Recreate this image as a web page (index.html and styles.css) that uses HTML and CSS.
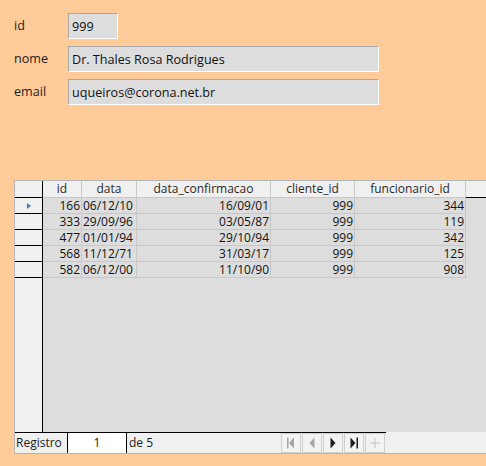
FILE: index.html
```html
<!DOCTYPE html>
<html lang="pt">
<head>
<meta charset="utf-8">
<title>Pedidos</title>
<link rel="stylesheet" href="styles.css">
</head>
<body>
<div class="page">
  <form class="form">
    <div class="field">
      <label class="label">id</label>
      <div class="input input-short">999</div>
    </div>
    <div class="field">
      <label class="label">nome</label>
      <div class="input input-long">Dr. Thales Rosa Rodrigues</div>
    </div>
    <div class="field">
      <label class="label">email</label>
      <div class="input input-long">uqueiros@corona.net.br</div>
    </div>
  </form>

  <div class="grid">
    <div class="grid-body">
      <div class="rowhdr">
        <div class="rh rh-top"></div>
        <div class="rh"><span class="cursor"></span></div>
        <div class="rh"></div>
        <div class="rh"></div>
        <div class="rh"></div>
        <div class="rh"></div>
      </div>
      <div class="cells">
        <div class="hrow">
          <div class="hc c-id">id</div>
          <div class="hc c-data">data</div>
          <div class="hc c-conf">data_confirmacao</div>
          <div class="hc c-cli">cliente_id</div>
          <div class="hc c-func">funcionario_id</div>
          <div class="hfill"></div>
        </div>
        <div class="drow">
          <div class="dc c-id r">166</div>
          <div class="dc c-data">06/12/10</div>
          <div class="dc c-conf r">16/09/01</div>
          <div class="dc c-cli r">999</div>
          <div class="dc c-func r">344</div>
        </div>
        <div class="drow">
          <div class="dc c-id r">333</div>
          <div class="dc c-data">29/09/96</div>
          <div class="dc c-conf r">03/05/87</div>
          <div class="dc c-cli r">999</div>
          <div class="dc c-func r">119</div>
        </div>
        <div class="drow">
          <div class="dc c-id r">477</div>
          <div class="dc c-data">01/01/94</div>
          <div class="dc c-conf r">29/10/94</div>
          <div class="dc c-cli r">999</div>
          <div class="dc c-func r">342</div>
        </div>
        <div class="drow">
          <div class="dc c-id r">568</div>
          <div class="dc c-data">11/12/71</div>
          <div class="dc c-conf r">31/03/17</div>
          <div class="dc c-cli r">999</div>
          <div class="dc c-func r">125</div>
        </div>
        <div class="drow">
          <div class="dc c-id r">582</div>
          <div class="dc c-data">06/12/00</div>
          <div class="dc c-conf r">11/10/90</div>
          <div class="dc c-cli r">999</div>
          <div class="dc c-func r">908</div>
        </div>
      </div>
    </div>
    <div class="nav">
      <div class="nav-left">
        <span class="nav-label">Registro</span>
        <span class="nav-pos">1</span>
        <span class="nav-count">de 5</span>
        <div class="nav-buttons">
          <span class="nbtn">
            <svg width="12" height="12" viewBox="0 0 12 12"><rect x="2" y="0.5" width="1.5" height="11" fill="#a6a6a6"/><path d="M9 0.5 L4 6 L9 11.5 Z" fill="#a6a6a6"/></svg>
          </span>
          <span class="nbtn">
            <svg width="12" height="12" viewBox="0 0 12 12"><path d="M8.5 0.5 L3.5 6 L8.5 11.5 Z" fill="#a6a6a6"/></svg>
          </span>
          <span class="nbtn">
            <svg width="12" height="12" viewBox="0 0 12 12"><path d="M3.5 0.5 L8.5 6 L3.5 11.5 Z" fill="#1e1e1e"/></svg>
          </span>
          <span class="nbtn">
            <svg width="12" height="12" viewBox="0 0 12 12"><path d="M2.5 0.5 L7.5 6 L2.5 11.5 Z" fill="#1e1e1e"/><rect x="8.5" y="0.5" width="1.5" height="11" fill="#1e1e1e"/></svg>
          </span>
          <span class="nbtn">
            <svg width="12" height="12" viewBox="0 0 12 12"><rect x="5.5" y="1" width="1" height="10" fill="#c4c4c4"/><rect x="1" y="5.5" width="10" height="1" fill="#c4c4c4"/></svg>
          </span>
        </div>
      </div>
      <div class="nav-right"></div>
    </div>
  </div>
</div>
</body>
</html>
```

FILE: styles.css
```css
html, body {
  margin: 0;
  padding: 0;
}
body {
  background: #ffcc99;
  font-family: "Open Sans", "Noto Sans", sans-serif;
  font-size: 12px;
  color: #1c1c1c;
  overflow: hidden;
}
.page {
  width: 486px;
  height: 466px;
  overflow: hidden;
}
.form {
  display: flex;
  flex-direction: column;
  gap: 7px;
  padding: 13px 0 0 14px;
  margin: 0;
  font-size: 12.6px;
}
.field {
  display: flex;
  align-items: center;
  height: 26px;
}
.label {
  width: 54px;
  line-height: 16px;
}
.input {
  box-sizing: border-box;
  height: 26px;
  background: #dddddd;
  border-top: 1px solid #a8a8a8;
  border-left: 1px solid #a8a8a8;
  border-right: 1px solid #ffffff;
  border-bottom: 1px solid #ffffff;
  padding: 0 3px;
  display: flex;
  align-items: center;
  color: #111;
}
.input-short { width: 50px; }
.input-long { width: 311px; }

.grid {
  margin: 75px 0 0 14px;
  width: 490px;
  height: 274px;
  box-sizing: border-box;
  border: 1px solid #b6b6b6;
  border-right: none;
  background: #dddddd;
  display: flex;
  flex-direction: column;
}
.grid-body {
  flex: 1;
  display: flex;
  min-height: 0;
}
.rowhdr {
  width: 27px;
  background: #f0f0f0;
  border-right: 1px solid #000;
  display: flex;
  flex-direction: column;
}
.rh {
  height: 15px;
  border-bottom: 1px solid #000;
  display: flex;
  align-items: center;
  justify-content: center;
}
.rh-top { height: 16px; }
.cursor {
  width: 0;
  height: 0;
  border-top: 3px solid transparent;
  border-bottom: 3px solid transparent;
  border-left: 4px solid #3f80c0;
}
.cells {
  flex: 1;
  display: flex;
  flex-direction: column;
}
.hrow, .drow {
  display: flex;
}
.hrow {
  height: 17px;
  background: #f0f0f0;
}
.hc {
  box-sizing: border-box;
  height: 17px;
  border-right: 1px solid #c8c8c8;
  border-bottom: 1px solid #c8c8c8;
  text-align: center;
  line-height: 15px;
  color: #2a2a2a;
}
.hfill {
  flex: 1;
  border-bottom: 1px solid #000;
}
.drow { height: 16px; }
.dc {
  box-sizing: border-box;
  height: 16px;
  border-right: 1px solid #c8c8c8;
  border-bottom: 1px solid #c8c8c8;
  line-height: 15px;
  padding: 0 1px 0 1px;
  white-space: nowrap;
  color: #111;
}
.r { text-align: right; }
.c-id { width: 39px; }
.c-data { width: 55px; }
.c-conf { width: 134px; }
.c-cli { width: 84px; }
.c-func { width: 111px; }

.nav {
  height: 21px;
  display: flex;
  background: #f0f0f0;
}
.nav-left {
  width: 371px;
  border-top: 1px solid #000;
  display: flex;
  align-items: stretch;
}
.nav-right {
  flex: 1;
}
.nav-label {
  width: 51px;
  padding-left: 1px;
  line-height: 20px;
  color: #1c1c1c;
}
.nav-pos {
  width: 58px;
  background: #ffffff;
  border-left: 1px solid #000;
  border-right: 1px solid #000;
  text-align: center;
  line-height: 20px;
  color: #1c1c1c;
}
.nav-count {
  flex: 1;
  padding-left: 2px;
  line-height: 20px;
}
.nav-buttons {
  display: flex;
  gap: 1px;
  margin-right: 1px;
}
.nbtn {
  box-sizing: border-box;
  width: 20px;
  height: 20px;
  border: 1px solid #cfcfcf;
  background: #f3f3f3;
  display: flex;
  align-items: center;
  justify-content: center;
}
```
